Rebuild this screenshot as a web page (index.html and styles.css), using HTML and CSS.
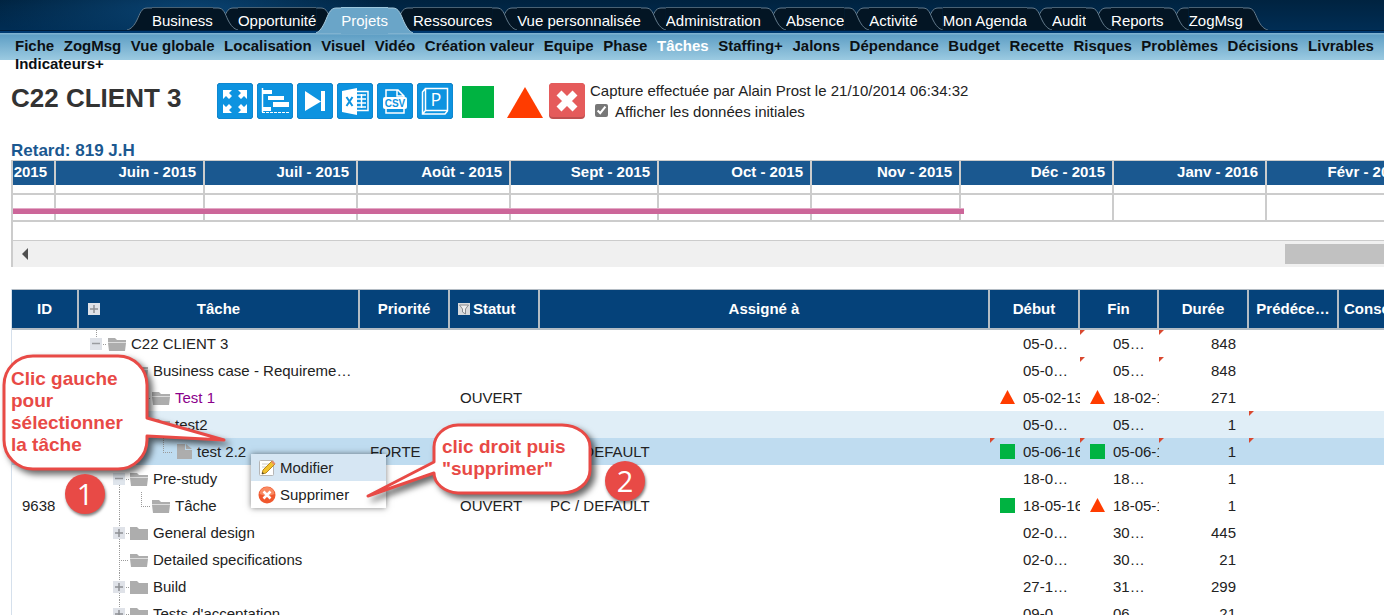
FILE: index.html
```html
<!DOCTYPE html>
<html lang="fr">
<head>
<meta charset="utf-8">
<title>C22 CLIENT 3 - Tâches</title>
<link rel="stylesheet" href="styles.css">
</head>
<body>
<svg class="defs" width="0" height="0" aria-hidden="true">
  <symbol id="cap-l" viewBox="0 0 25 26"><path class="cap-fill" d="M25 1H20C14 1 13 7 10 13C7 19 4 22 0 23V26H25Z"/><path class="cap-line" d="M25 1H20C14 1 13 7 10 13C7 19 4 22 0 23"/></symbol>
  <symbol id="cap-r" viewBox="0 0 25 26"><path class="cap-fill" d="M0 1H5C11 1 12 7 15 13C18 19 21 22 25 23V26H0Z"/><path class="cap-line" d="M0 1H5C11 1 12 7 15 13C18 19 21 22 25 23"/></symbol>
  <symbol id="cap-l-on" viewBox="0 0 25 26"><path class="cap-fill" d="M25 1H20C14 1 12 8 9 15C6 21 4 24 0 26H25Z"/><path class="cap-line" d="M25 1H20C14 1 12 8 9 15C6 21 4 24 0 26"/></symbol>
  <symbol id="cap-r-on" viewBox="0 0 25 26"><path class="cap-fill" d="M0 1H5C11 1 13 8 16 15C19 21 21 24 25 26H0Z"/><path class="cap-line" d="M0 1H5C11 1 13 8 16 15C19 21 21 24 25 26"/></symbol>
  <symbol id="folder-open" viewBox="0 0 24 27"><path d="M1 8h7l2 2h9v2H1zM1 13h18l-1 8H2z" fill="#adadad"/><path d="M1 12.500h18" stroke="#ddd"/></symbol>
  <symbol id="folder" viewBox="0 0 24 27"><path d="M1 8h7l2 2h9v11H1z" fill="#adadad"/></symbol>
  <symbol id="file" viewBox="0 0 24 27"><path d="M4 6h8v6h7v9H4z" fill="#adadad"/><path d="M13 6l6 5h-6z" fill="#adadad"/></symbol>
  <symbol id="vert" viewBox="0 0 22 27"><path class="dots" d="M12.500 0V27"/></symbol>
  <symbol id="tee" viewBox="0 0 22 27"><path class="dots" d="M12.500 0V27M12 14.500H22"/></symbol>
  <symbol id="elbow" viewBox="0 0 22 27"><path class="dots" d="M12.500 0V14M12 14.500H22"/></symbol>
  <symbol id="root" viewBox="0 0 22 27"><path class="dots" d="M11.500 0V9M18 14.500H22"/><path d="M5 8h12v12H5z" fill="#dfe2e8"/><path d="M7 13.500h8" stroke="#9a9ca0" stroke-width="1.500"/></symbol>
  <symbol id="minus" viewBox="0 0 22 27"><path class="dots" d="M12.500 20V27M19 14.500H22"/><path d="M6 8h12v12H6z" fill="#dfe5ec"/><path d="M8 13.500h8" stroke="#9a9ca0" stroke-width="1.500"/></symbol>
  <symbol id="plus" viewBox="0 0 22 27"><path class="dots" d="M12.500 0V27M19 14.500H22"/><path d="M6 8h12v12H6z" fill="#dfe2e8"/><path d="M8 14h8M12 10v8" stroke="#8e9094" stroke-width="1.500"/></symbol>
  <symbol id="late" viewBox="0 0 15 15"><path d="M7.500 0L15 14H0z" fill="#ff3c00"/></symbol>
  <symbol id="ok" viewBox="0 0 15 15"><path d="M0 0h15v15H0z" fill="#00b341"/></symbol>
</svg>

<header>
  <nav class="tabs" aria-label="Modules">
    <a href="#"><svg class="cap"><use href="#cap-l"/></svg><span>Business</span><svg class="cap"><use href="#cap-r"/></svg></a>
    <a href="#"><svg class="cap"><use href="#cap-l"/></svg><span>Opportunité</span><svg class="cap"><use href="#cap-r"/></svg></a>
    <a href="#" class="active"><svg class="cap"><use href="#cap-l-on"/></svg><span>Projets</span><svg class="cap"><use href="#cap-r-on"/></svg></a>
    <a href="#"><svg class="cap"><use href="#cap-l"/></svg><span>Ressources</span><svg class="cap"><use href="#cap-r"/></svg></a>
    <a href="#"><svg class="cap"><use href="#cap-l"/></svg><span>Vue personnalisée</span><svg class="cap"><use href="#cap-r"/></svg></a>
    <a href="#"><svg class="cap"><use href="#cap-l"/></svg><span>Administration</span><svg class="cap"><use href="#cap-r"/></svg></a>
    <a href="#"><svg class="cap"><use href="#cap-l"/></svg><span>Absence</span><svg class="cap"><use href="#cap-r"/></svg></a>
    <a href="#"><svg class="cap"><use href="#cap-l"/></svg><span>Activité</span><svg class="cap"><use href="#cap-r"/></svg></a>
    <a href="#"><svg class="cap"><use href="#cap-l"/></svg><span>Mon Agenda</span><svg class="cap"><use href="#cap-r"/></svg></a>
    <a href="#"><svg class="cap"><use href="#cap-l"/></svg><span>Audit</span><svg class="cap"><use href="#cap-r"/></svg></a>
    <a href="#"><svg class="cap"><use href="#cap-l"/></svg><span>Reports</span><svg class="cap"><use href="#cap-r"/></svg></a>
    <a href="#"><svg class="cap"><use href="#cap-l"/></svg><span>ZogMsg</span><svg class="cap"><use href="#cap-r"/></svg></a>
  </nav>
  <nav class="submenu" aria-label="Projet">
    <a href="#">Fiche</a><a href="#">ZogMsg</a><a href="#">Vue globale</a><a href="#">Localisation</a><a href="#">Visuel</a><a href="#">Vidéo</a><a href="#">Création valeur</a><a href="#">Equipe</a><a href="#">Phase</a><a href="#" class="active">Tâches</a><a href="#">Staffing+</a><a href="#">Jalons</a><a href="#">Dépendance</a><a href="#">Budget</a><a href="#">Recette</a><a href="#">Risques</a><a href="#">Problèmes</a><a href="#">Décisions</a><a href="#">Livrables</a><a href="#">Indicateurs+</a>
  </nav>
</header>

<main>
  <section class="heading">
    <h1>C22 CLIENT 3</h1>
    <div class="toolbar">
      <button aria-label="Plein écran"><svg width="36" height="36" viewBox="0 0 36 36"><rect class="tile" width="36" height="36" rx="4"/><g fill="#fff"><path d="M6 7h9l-3 3 3 3-3 3-3-3-3 3z"/><path d="M30 7h-9l3 3-3 3 3 3 3-3 3 3z"/><path d="M6 30h9l-3-3 3-3-3-3-3 3-3-3z"/><path d="M30 30h-9l3-3-3-3 3-3 3 3 3-3z"/></g></svg></button>
      <button aria-label="Gantt"><svg width="36" height="36" viewBox="0 0 36 36"><rect class="tile" width="36" height="36" rx="4"/><path d="M5.500 5v24" fill="none" stroke="#fff" stroke-width="1.500"/><path d="M5 29.500H33" fill="none" stroke="#fff" stroke-dasharray="3 1"/><path d="M5 7h10v4H5zM11 13h16v4H11zM16 19h16v5H16zM6 24h8v4H6z" fill="#fff"/></svg></button>
      <button aria-label="Avancer"><svg width="36" height="36" viewBox="0 0 36 36"><rect class="tile" width="36" height="36" rx="4"/><path d="M8 8l16 10.500L8 28zM24 8h4v20h-4z" fill="#fff"/></svg></button>
      <button aria-label="Export Excel"><svg width="36" height="36" viewBox="0 0 36 36"><rect class="tile" width="36" height="36" rx="4"/><path d="M18 8.500h13v19H18M20 12h9M20 16h9M20 20h9M20 24h9M24.500 11v14" fill="none" stroke="#fff" stroke-width="1.500"/><path d="M5 8l15-3v27L5 29z" fill="#fff"/><path d="M9.500 14l6 9M15.500 14l-6 9" stroke="#0d93e0" stroke-width="2"/></svg></button>
      <button aria-label="Export CSV"><svg width="36" height="36" viewBox="0 0 36 36"><rect class="tile" width="36" height="36" rx="4"/><path d="M9 15V7h12l6 6v2M20 7v6h7M9 25v5h18v-5" fill="none" stroke="#fff" stroke-width="1.500"/><rect x="6" y="14" width="24" height="12" rx="2" fill="#fff"/><text x="18" y="24" text-anchor="middle" class="csv">CSV</text></svg></button>
      <button aria-label="Export Project"><svg width="36" height="36" viewBox="0 0 36 36"><rect class="tile" width="36" height="36" rx="4"/><path d="M8.500 5.500h22v22h-22zM8 6l-2.500 3v22H28l2.500-3M5.500 31l3-3.500" fill="none" stroke="#fff" stroke-width="1.500"/><text x="19" y="23" text-anchor="middle" class="p-letter">P</text></svg></button>
      <button aria-label="Statut correct"><svg width="40" height="36" viewBox="0 0 40 36"><path d="M5 3h32v32H5z" fill="#00b341"/></svg></button>
      <button aria-label="Alerte"><svg width="44" height="36" viewBox="0 0 44 36"><path d="M24 4l18 31H6z" fill="#ff3c00"/></svg></button>
      <button aria-label="Effacer la capture"><svg width="36" height="36" viewBox="0 0 36 36"><rect width="36" height="36" rx="4" fill="#c05050"/><rect width="36" height="34" rx="4" fill="#e55b5b"/><path d="M10 10l16 16M26 10l-16 16" stroke="#fff" stroke-width="7"/></svg></button>
    </div>
    <div class="capture">
      <p>Capture effectuée par Alain Prost le 21/10/2014 06:34:32</p>
      <label><input type="checkbox" checked>Afficher les données initiales</label>
    </div>
  </section>

  <section class="gantt">
    <h2>Retard: 819 J.H</h2>
    <div class="gantt-box">
      <div class="months">
        <div class="month first"><b>2015</b></div>
        <div class="month m149"><b>Juin - 2015</b></div>
        <div class="month m153"><b>Juil - 2015</b></div>
        <div class="month m153"><b>Août - 2015</b></div>
        <div class="month m148"><b>Sept - 2015</b></div>
        <div class="month m153"><b>Oct - 2015</b></div>
        <div class="month m149"><b>Nov - 2015</b></div>
        <div class="month m153"><b>Déc - 2015</b></div>
        <div class="month m153"><b>Janv - 2016</b></div>
        <div class="month m148"><b>Févr - 2016</b></div>
        <div class="bar"></div>
      </div>
      <div class="scroll"><svg width="6" height="12" viewBox="0 0 6 12"><path d="M6 0v12L0 6z" fill="#505050"/></svg><div class="thumb"></div></div>
    </div>
  </section>

  <section class="grid">
    <table>
      <colgroup><col class="c-id"><col class="c-task"><col class="c-90"><col class="c-90"><col class="c-who"><col class="c-90"><col class="c-fin"><col class="c-90"><col class="c-90"><col class="c-90"></colgroup>
      <thead><tr>
        <th>ID</th>
        <th><svg class="expand" width="12" height="12" viewBox="0 0 12 12"><path d="M0 0h12v12H0z" fill="#dfe2e8"/><path d="M2 6h8M6 2v8" stroke="#8e9094" stroke-width="1.500"/></svg>Tâche</th>
        <th>Priorité</th>
        <th class="left"><svg class="filter" width="12" height="12" viewBox="0 0 12 12"><path d="M0 0h12v12H0z" fill="#d9dadc"/><path d="M1.500 2h9L7.500 6v5l-3-2V6z" fill="#eee" stroke="#8a8c90"/></svg>Statut</th>
        <th>Assigné à</th><th>Début</th><th>Fin</th><th>Durée</th><th>Prédéce…</th><th class="clip">Consommé</th>
      </tr></thead>
      <tbody>
        <tr><td></td><td><div class="tree"><svg class="s"><use href="#root"/></svg><svg class="f"><use href="#folder-open"/></svg>C22 CLIENT 3</div></td><td></td><td></td><td></td><td><div class="date"><i></i>05-0…</div></td><td class="mod"><div class="date"><i></i>05…</div></td><td class="num mod">848</td><td></td><td></td></tr>
        <tr><td></td><td><div class="tree"><i class="s"></i><svg class="s"><use href="#minus"/></svg><svg class="f"><use href="#folder-open"/></svg>Business case - Requireme…</div></td><td></td><td></td><td></td><td><div class="date"><i></i>05-0…</div></td><td class="mod"><div class="date"><i></i>05…</div></td><td class="num mod">848</td><td></td><td></td></tr>
        <tr><td></td><td><div class="tree"><i class="s"></i><svg class="s"><use href="#vert"/></svg><svg class="s"><use href="#tee"/></svg><svg class="f"><use href="#folder-open"/></svg><span class="visited">Test 1</span></div></td><td></td><td>OUVERT</td><td></td><td><div class="date"><svg><use href="#late"/></svg>05-02-13</div></td><td><div class="date"><svg><use href="#late"/></svg>18-02-13</div></td><td class="num">271</td><td></td><td></td></tr>
        <tr class="hover"><td></td><td><div class="tree"><i class="s"></i><svg class="s"><use href="#vert"/></svg><svg class="s"><use href="#minus"/></svg><svg class="f"><use href="#folder-open"/></svg>test2</div></td><td></td><td></td><td></td><td><div class="date"><i></i>05-0…</div></td><td><div class="date"><i></i>05…</div></td><td class="num">1</td><td class="mod"></td><td></td></tr>
        <tr class="selected"><td></td><td><div class="tree"><i class="s"></i><svg class="s"><use href="#vert"/></svg><i class="s"></i><svg class="s"><use href="#elbow"/></svg><svg class="f"><use href="#file"/></svg>test 2.2</div></td><td>FORTE</td><td></td><td>PC / DEFAULT</td><td class="mod"><div class="date"><svg><use href="#ok"/></svg>05-06-16</div></td><td class="mod"><div class="date"><svg><use href="#ok"/></svg>05-06-16</div></td><td class="num mod">1</td><td class="mod"></td><td></td></tr>
        <tr><td></td><td><div class="tree"><i class="s"></i><svg class="s"><use href="#minus"/></svg><svg class="f"><use href="#folder-open"/></svg>Pre-study</div></td><td></td><td></td><td></td><td><div class="date"><i></i>18-0…</div></td><td><div class="date"><i></i>18…</div></td><td class="num">1</td><td></td><td></td></tr>
        <tr><td>9638</td><td><div class="tree"><i class="s"></i><svg class="s"><use href="#vert"/></svg><svg class="s"><use href="#elbow"/></svg><svg class="f"><use href="#folder-open"/></svg>Tâche</div></td><td></td><td>OUVERT</td><td>PC / DEFAULT</td><td><div class="date"><svg><use href="#ok"/></svg>18-05-16</div></td><td><div class="date"><svg><use href="#late"/></svg>18-05-16</div></td><td class="num">1</td><td></td><td></td></tr>
        <tr><td></td><td><div class="tree"><i class="s"></i><svg class="s"><use href="#plus"/></svg><svg class="f"><use href="#folder"/></svg>General design</div></td><td></td><td></td><td></td><td><div class="date"><i></i>02-0…</div></td><td><div class="date"><i></i>30…</div></td><td class="num">445</td><td></td><td></td></tr>
        <tr><td></td><td><div class="tree"><i class="s"></i><svg class="s"><use href="#tee"/></svg><svg class="f"><use href="#folder-open"/></svg>Detailed specifications</div></td><td></td><td></td><td></td><td><div class="date"><i></i>02-0…</div></td><td><div class="date"><i></i>30…</div></td><td class="num">21</td><td></td><td></td></tr>
        <tr><td></td><td><div class="tree"><i class="s"></i><svg class="s"><use href="#plus"/></svg><svg class="f"><use href="#folder"/></svg>Build</div></td><td></td><td></td><td></td><td><div class="date"><i></i>27-1…</div></td><td><div class="date"><i></i>31…</div></td><td class="num">299</td><td></td><td></td></tr>
        <tr><td></td><td><div class="tree"><i class="s"></i><svg class="s"><use href="#plus"/></svg><svg class="f"><use href="#folder"/></svg>Tests d'acceptation</div></td><td></td><td></td><td></td><td><div class="date"><i></i>09-0…</div></td><td><div class="date"><i></i>06…</div></td><td class="num">21</td><td></td><td></td></tr>
      </tbody>
    </table>
  </section>
</main>

<div class="menu">
  <button class="current"><svg width="18" height="18" viewBox="0 0 18 18"><rect x="1.500" y="1.500" width="14" height="15" rx="1" fill="#fff" stroke="#b5b5b5"/><path d="M4 5h7M4 8h5" stroke="#ccc"/><path d="M4 15l1-4 9-9 3 3-9 9z" fill="#f2c230" stroke="#b98a1c"/><path d="M13 3l1.500-1.500 3 3L16 6z" fill="#e58b6b"/><path d="M4 15l.5-2 1.500 1.500z" fill="#333"/></svg>Modifier</button>
  <button><svg width="18" height="18" viewBox="0 0 18 18"><circle cx="9" cy="9" r="8.500" fill="#f0582e"/><path d="M1.500 8a7.500 7 0 0 1 15 0q-7 3-15 0z" fill="#f98a62"/><path d="M5.500 5.500l7 7M12.500 5.500l-7 7" stroke="#fff" stroke-width="2.500"/></svg>Supprimer</button>
</div>

<div class="note note-1">
  <svg width="240" height="140" viewBox="0 0 240 140"><path d="M32 4H117A29 29 0 0 1 146 33V66L223 88L146 84V88A29 29 0 0 1 117 117H32A29 29 0 0 1 3 88V33A29 29 0 0 1 32 4Z"/></svg>
  <p>Clic gauche<br>pour<br>sélectionner<br>la tâche</p>
</div>
<div class="note note-2">
  <svg width="250" height="100" viewBox="0 0 250 100"><path d="M98 4H202A28 22 0 0 1 230 26V49A28 23 0 0 1 202 72H98A26 20 0 0 1 74 52L8 75L74 41V26A25 22 0 0 1 98 4Z"/></svg>
  <p>clic droit puis<br>"supprimer"</p>
</div>
<div class="step step-1">1</div>
<div class="step step-2">2</div>
</body>
</html>
```
FILE: styles.css
```css
* { box-sizing: border-box; }
html { overflow: hidden; }
body {
  margin: 0;
  height: 100vh;
  overflow: hidden;
  position: relative;
  background: #fff;
  color: #222;
  font: 15px/18px "Liberation Sans", Arial, sans-serif;
}
a { color: inherit; text-decoration: none; }
button { border: 0; padding: 0; background: none; font: inherit; color: inherit; }
.defs { position: absolute; }

/* Module tabs */
.tabs {
  display: flex;
  height: 33px;
  padding: 7px 0 0 127px;
  background:
    linear-gradient(#001c38 0 1px, #003a70 1px 3px) bottom / 100% 3px no-repeat,
    radial-gradient(ellipse 200px 40px at 190px 10px, #0a4372, transparent),
    linear-gradient(#002340, #002e56);
}
.tabs a { display: flex; height: 23px; margin-right: -25px; position: relative; color: #fff; flex: none; }
.tabs span { background: #031524; border-top: 1px solid #4a6274; line-height: 25px; }
.cap { width: 25px; height: 26px; flex: none; clip-path: inset(0 0 3px 0); }
.cap-fill { fill: var(--tab, #031524); }
.cap-line { fill: none; stroke: var(--line, #647b8c); stroke-width: 1; }
.tabs a:nth-child(1) { z-index: 12; }
.tabs a:nth-child(2) { z-index: 11; }
.tabs a:nth-child(3) { z-index: 13; }
.tabs a:nth-child(4) { z-index: 9; }
.tabs a:nth-child(5) { z-index: 8; }
.tabs a:nth-child(6) { z-index: 7; }
.tabs a:nth-child(7) { z-index: 6; }
.tabs a:nth-child(8) { z-index: 5; }
.tabs a:nth-child(9) { z-index: 4; }
.tabs a:nth-child(10) { z-index: 3; }
.tabs a:nth-child(11) { z-index: 2; }
.tabs a:nth-child(12) { z-index: 1; }
.tabs .active { height: 27px; --tab: #6aa5c8; --line: #a8cbdd; }
.tabs .active span { background: #6aa5c8; border-color: #9cc6dc; }
.tabs .active .cap { clip-path: none; }

/* Project sub menu: the band only covers the first line */
.submenu {
  display: flex;
  flex-wrap: wrap;
  justify-content: space-between;
  column-gap: 8px;
  padding: 4px 10px 0 15px;
  background: linear-gradient(#7fb2d0 0 1px, #5f9fc5 2px, #9bcae1) top / 100% 27px no-repeat;
  color: #0b1014;
  font-weight: bold;
}
.submenu .active { color: #fff; }

/* Heading and tools */
.heading { display: flex; padding: 9px 0 0 11px; height: 69px; }
h1 { margin: 0; min-width: 206px; font-size: 26px; line-height: 32px; color: #333; }
.toolbar { display: flex; gap: 4px; padding-top: 1px; }
.toolbar svg { display: block; }
.toolbar button { height: 36px; }
.tile { fill: #0d93e0; stroke: #0f7fc4; stroke-width: 1; }
.csv { font: bold 10px "Liberation Sans", Arial, sans-serif; fill: #0d93e0; }
.p-letter { font: 18px "Open Sans", sans-serif; fill: #fff; }
.capture { padding-left: 5px; }
.capture p { margin: 0; line-height: 18px; }
.capture label { display: flex; align-items: center; gap: 7px; line-height: 24px; }
.capture input { width: 13px; height: 13px; margin: 0 0 4px 5px; accent-color: #777; }

/* Gantt */
h2 { margin: 0 0 0 11px; font-size: 17px; line-height: 18px; color: #1a5890; }
.gantt-box { margin-left: 11px; border: solid #ccc; border-width: 1px 0 0 2px; }
.months {
  display: flex;
  height: 79px;
  overflow: hidden;
  position: relative;
  background: linear-gradient(#ccc, #ccc) 0 32px / 100% 2px no-repeat,
              linear-gradient(#ccc, #ccc) 0 59px / 100% 2px no-repeat;
}
.month { flex: none; height: 60px; border-right: 2px solid #ccc; color: #fff; text-align: right; }
.month b { display: block; height: 24px; padding-right: 7px; line-height: 22px; background: #1a5890; white-space: nowrap; }
.first { width: 43px; }
.m148 { width: 148px; }
.m149 { width: 149px; }
.m153 { width: 153px; }
.bar { position: absolute; left: 0; top: 47px; width: 951px; height: 6px; background: #cc6699; border-top: 1px solid #e3a9c6; }
.scroll { display: flex; align-items: center; justify-content: space-between; height: 27px; padding-left: 9px; background: #f0f0f0; border-top: 1px solid #ccc; }
.thumb { width: 99px; height: 20px; background: #c1c1c1; }

/* Task grid */
.grid { margin: 22px 0 0 11px; overflow: hidden; }
table { width: 1418px; table-layout: fixed; border-collapse: separate; border-spacing: 0; border-left: 1px solid #d5e0ec; }
.c-id { width: 67px; }
.c-task { width: 281px; }
.c-90 { width: 90px; }
.c-who { width: 450px; }
.c-fin { width: 79px; }
th {
  height: 41px;
  padding: 0;
  position: relative;
  background: #05427a;
  color: #fff;
  border: solid #b4bcc4;
  border-width: 1px 2px 2px 0;
  white-space: nowrap;
}
th.left { text-align: left; padding-left: 8px; }
th.clip { text-align: left; padding-left: 5px; }
.expand { position: absolute; left: 9px; top: 13px; }
.filter { margin: 0 3px -1px 0; }
td { height: 27px; padding: 0 0 0 10px; white-space: nowrap; overflow: hidden; }
.tree { display: flex; align-items: center; height: 27px; margin-left: -4px; }
.s { width: 22px; height: 27px; flex: none; }
.f { width: 24px; height: 27px; flex: none; }
.dots { fill: none; stroke: #9a9a9a; stroke-dasharray: 1 1; }
.visited { color: #8b008b; }
.date { display: flex; align-items: center; gap: 8px; overflow: hidden; }
.date svg, .date i { width: 15px; height: 15px; flex: none; }
.num { text-align: right; padding: 1px 13px 0 0; }
.hover { background: #e0eef7; }
.selected { background: #bfdcf0; }
.mod { background: linear-gradient(135deg, #d9482f 3px, transparent 4px); }

/* Context menu */
.menu { position: absolute; left: 251px; top: 454px; width: 135px; background: #fff; box-shadow: 0 0 6px rgba(0, 0, 0, .5); }
.menu button { display: flex; align-items: center; gap: 4px; width: 100%; height: 27px; padding-left: 7px; }
.menu .current { background: #d6e6f3; }

/* Annotations */
.note { position: absolute; color: #e84a46; font-size: 19px; font-weight: bold; line-height: 22px; }
.note svg { display: block; overflow: visible; filter: drop-shadow(4px 4px 3px rgba(0, 0, 0, .6)); }
.note path { fill: #fff; stroke: #e84a46; stroke-width: 3; stroke-linejoin: round; }
.note p { position: absolute; margin: 0; white-space: nowrap; }
.note-1 { left: 1px; top: 352px; }
.note-1 p { left: 10px; top: 16px; }
.note-2 { left: 360px; top: 421px; }
.note-2 p { left: 82px; top: 15px; }
.step {
  position: absolute;
  width: 40px;
  height: 40px;
  border-radius: 50%;
  background: #e84a46;
  color: #fff;
  font: 29px/40px "Open Sans", sans-serif;
  text-align: center;
  box-shadow: 1px 2px 3px rgba(0, 0, 0, .5);
}
.step-1 { left: 65px; top: 474px; }
.step-2 { left: 605px; top: 461px; }
```
